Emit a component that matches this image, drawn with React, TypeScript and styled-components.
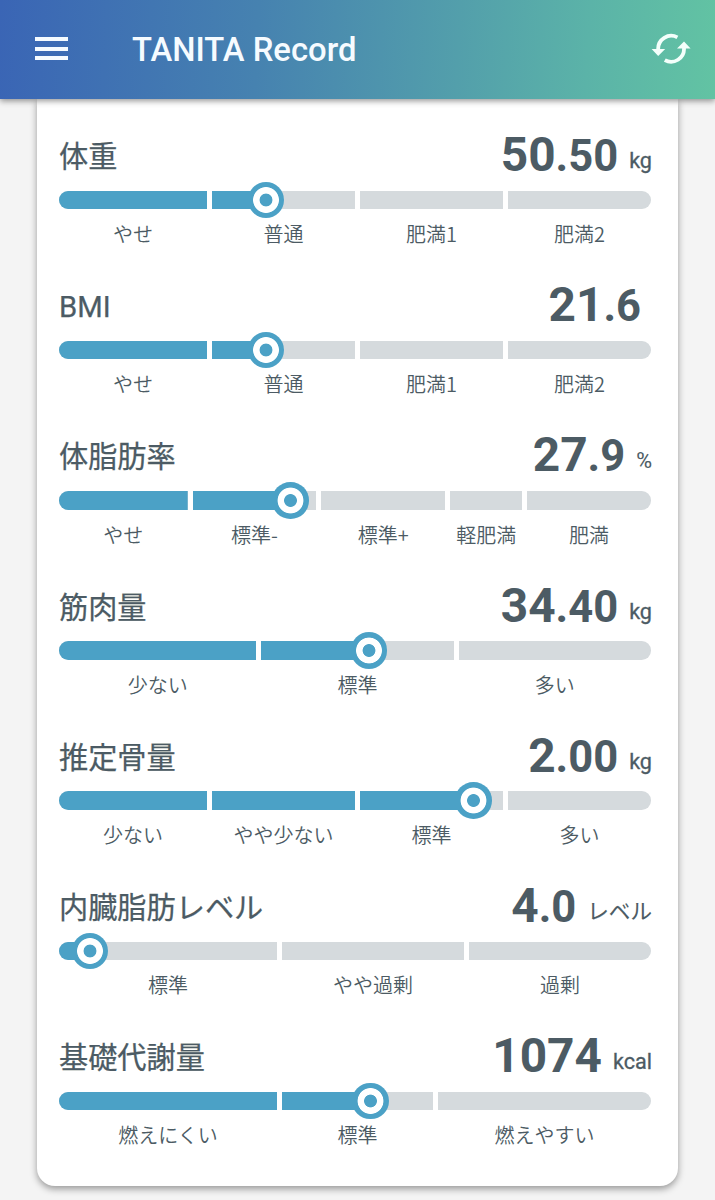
import React from "react";
import styled, { createGlobalStyle } from "styled-components";

const ACCENT = "#4ba1c6";
const TRACK = "#d5dadd";
const INK = "#4c5b64";

const GlobalStyle = createGlobalStyle`
  * { box-sizing: border-box; }
  body {
    margin: 0;
    background: #f4f4f4;
    font-family: Roboto, "Noto Sans CJK JP", sans-serif;
    color: ${INK};
  }
`;

const Screen = styled.div`
  height: 1200px;
  display: flex;
  flex-direction: column;
  overflow: hidden;
`;

const Header = styled.header`
  position: relative;
  z-index: 1;
  flex: none;
  height: 99px;
  padding: 0 24px 0 35px;
  display: flex;
  align-items: center;
  background: linear-gradient(93deg, #3a65b5 0%, #4682b0 36%, #539fab 64%, #5bb3a8 82%, #62c3a3 100%);
  box-shadow: 0 2px 6px rgba(0, 0, 0, 0.42);
`;

const MenuButton = styled.button`
  width: 33px;
  height: 23px;
  margin-top: -2px;
  padding: 0;
  border: 0;
  background: none;
  display: flex;
  flex-direction: column;
  justify-content: space-between;
`;

const MenuLine = styled.span`
  height: 4px;
  background: #f6fbff;
`;

const AppTitle = styled.h1`
  flex: 1;
  margin: 2px 0 0 64px;
  font-size: 32.8px;
  font-weight: 500;
  line-height: 97px;
  color: #f6fbff;
`;

const SyncButton = styled.button`
  width: 40px;
  height: 32px;
  margin-top: -2px;
  padding: 0;
  border: 0;
  background: none;
  svg { display: block; }
`;

const Card = styled.main`
  flex: none;
  width: 641px;
  height: 1087px;
  margin: 0 0 0 37px;
  padding: 21px 27px 0 22px;
  background: #fff;
  border-radius: 0 0 18px 18px;
  box-shadow: 0 3px 7px rgba(0, 0, 0, 0.38);
`;

const Metric = styled.section`
  height: 150.2px;
`;

const MetricHead = styled.div`
  height: 70.7px;
  display: flex;
  justify-content: space-between;
  align-items: flex-start;
`;

const MetricName = styled.h2`
  margin: 0;
  padding-top: 16px;
  font-size: 29.2px;
  font-weight: 400;
  line-height: 43px;
  -webkit-text-stroke: 0.25px ${INK};
`;

const Reading = styled.div`
  display: flex;
  align-items: baseline;
  padding-top: 2px;
  line-height: 66px;
  white-space: nowrap;
`;

const Whole = styled.span`
  font-size: 47.8px;
  font-weight: 700;
`;

const Fraction = styled.span`
  font-size: 43.5px;
  font-weight: 700;
`;

const Unit = styled.span<{ $strong: boolean }>`
  position: relative;
  top: -3px;
  margin: 0 -1px 0 11px;
  font-size: 21.6px;
  -webkit-text-stroke: ${(p) => (p.$strong ? 0.3 : 0.1)}px ${INK};
`;

const Gauge = styled.div`
  position: relative;
  height: 18.5px;
`;

const Segments = styled.div`
  display: flex;
  height: 18.5px;
  border-radius: 9.25px;
  overflow: hidden;
`;

const Segment = styled.div<{ $share: number }>`
  flex: none;
  width: ${(p) => p.$share * 100}%;
  background: linear-gradient(${ACCENT}, ${ACCENT}) no-repeat ${TRACK};
  border-left: 5px solid #fff;
  background-origin: border-box;
  &:first-child { border-left: 0; }
`;

const Knob = styled.div`
  position: absolute;
  top: -9px;
  width: 36.5px;
  height: 36.5px;
  margin-left: -18.5px;
  border-radius: 50%;
  background: radial-gradient(
    circle,
    ${ACCENT} 6px, #fff 6.8px, #fff 12.5px, ${ACCENT} 13.3px
  );
`;

const Labels = styled.div`
  display: flex;
  padding-top: 10px;
`;

const Label = styled.span<{ $share: number }>`
  flex: none;
  width: ${(p) => p.$share * 100}%;
  display: flex;
  justify-content: center;
  font-family: "Noto Sans CJK JP", sans-serif;
  font-size: 20px;
  font-weight: 350;
  line-height: 30px;
  white-space: nowrap;
  padding-left: 5px;
  &:first-child { padding-left: 0; }
`;

type Zone = [label: string, span: number];

interface MetricData {
  name: string;
  whole: string;
  fraction?: string;
  unit?: string;
  at: number;
  zones: Zone[];
}

const BAR = 592;

const metrics: MetricData[] = [
  { name: "体重", whole: "50", fraction: ".50", unit: "kg", at: 207.3,
    zones: [["やせ", 1], ["普通", 1], ["肥満1", 1], ["肥満2", 1]] },
  { name: "BMI", whole: "21", fraction: ".6", at: 207.3,
    zones: [["やせ", 1], ["普通", 1], ["肥満1", 1], ["肥満2", 1]] },
  { name: "体脂肪率", whole: "27", fraction: ".9", unit: "%", at: 231.7,
    zones: [["やせ", 5], ["標準-", 5], ["標準+", 5], ["軽肥満", 3], ["肥満", 5]] },
  { name: "筋肉量", whole: "34", fraction: ".40", unit: "kg", at: 310.3,
    zones: [["少ない", 1], ["標準", 1], ["多い", 1]] },
  { name: "推定骨量", whole: "2", fraction: ".00", unit: "kg", at: 414.7,
    zones: [["少ない", 1], ["やや少ない", 1], ["標準", 1], ["多い", 1]] },
  { name: "内臓脂肪レベル", whole: "4", fraction: ".0", unit: "レベル", at: 31,
    zones: [["標準", 7], ["やや過剰", 6], ["過剰", 6]] },
  { name: "基礎代謝量", whole: "1074", unit: "kcal", at: 311.5,
    zones: [["燃えにくい", 7], ["標準", 5], ["燃えやすい", 7]] },
];

function MetricRow({ name, whole, fraction, unit, at, zones }: MetricData) {
  const total = zones.reduce((sum, z) => sum + z[1], 0);
  let start = 0;
  return (
    <Metric>
      <MetricHead>
        <MetricName>{name}</MetricName>
        <Reading>
          <Whole>{whole}</Whole>
          {fraction && <Fraction>{fraction}</Fraction>}
          <Unit $strong={/^[a-z]+$/.test(unit ?? "")}>{unit}</Unit>
        </Reading>
      </MetricHead>
      <Gauge>
        <Segments>
          {zones.map(([label, span]) => {
            const width = (span / total) * BAR;
            const filled = Math.max(0, Math.min(width, at - start));
            start += width;
            return <Segment key={label} $share={span / total} style={{ backgroundSize: `${filled}px 100%` }} />;
          })}
        </Segments>
        <Knob style={{ left: at }} />
      </Gauge>
      <Labels>
        {zones.map(([label, span]) => (
          <Label key={label} $share={span / total}>{label}</Label>
        ))}
      </Labels>
    </Metric>
  );
}

export default function App() {
  return (
    <Screen>
      <GlobalStyle />
      <Header>
        <MenuButton aria-label="Menu">
          <MenuLine />
          <MenuLine />
          <MenuLine />
        </MenuButton>
        <AppTitle>TANITA Record</AppTitle>
        <SyncButton aria-label="Sync">
          <svg width="40" height="32" viewBox="0 0 40 32">
            <g fill="none" stroke="#f4fffb" strokeWidth="3.8">
              <path d="M7.2 16.5A13 13 0 0 1 26.4 4.4" />
              <path d="M33 15A13 13 0 0 1 13.8 27.2" />
            </g>
            <g fill="#f4fffb">
              <path d="M.6 16H14.2L7.2 23Z" />
              <path d="M26 15.6H39.6L33 8.6Z" />
            </g>
          </svg>
        </SyncButton>
      </Header>
      <Card>
        {metrics.map((m) => (
          <MetricRow key={m.name} {...m} />
        ))}
      </Card>
    </Screen>
  );
}
